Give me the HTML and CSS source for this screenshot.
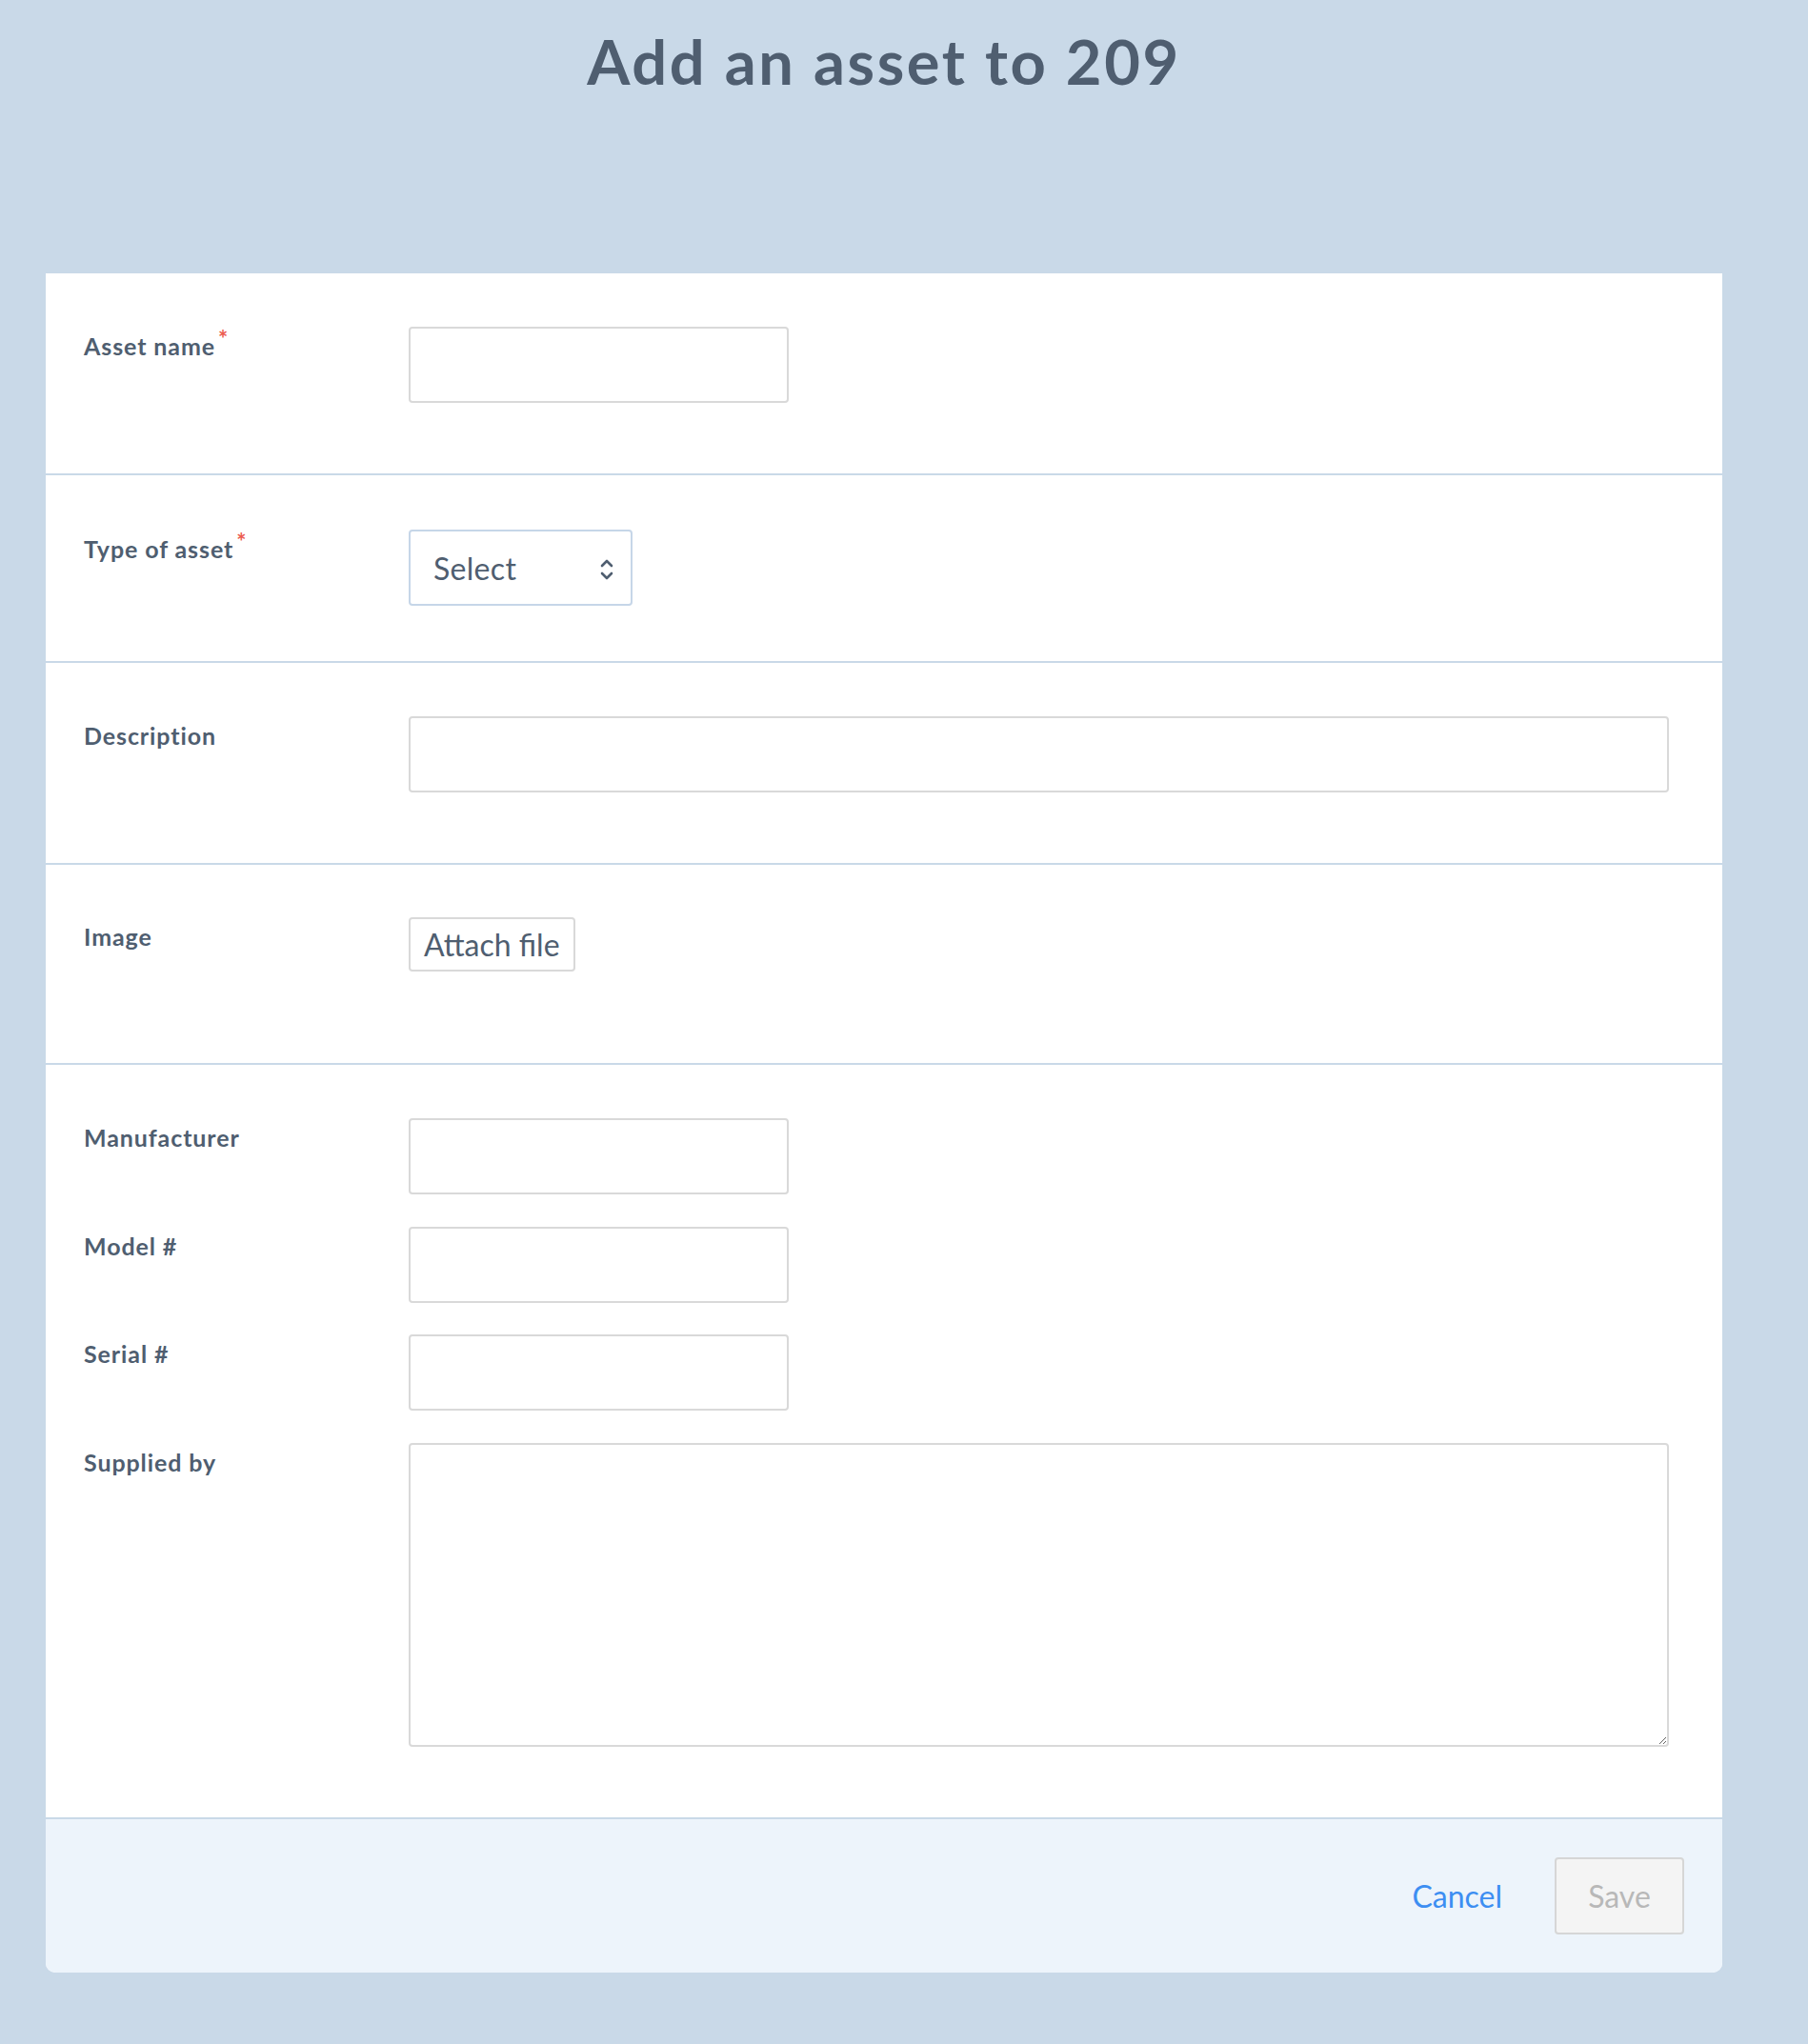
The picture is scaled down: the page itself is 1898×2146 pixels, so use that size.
FILE: index.html
```html
<!DOCTYPE html>
<html lang="en">
<head>
<meta charset="utf-8">
<title>Add an asset to 209</title>
<link rel="stylesheet" href="styles.css">
</head>
<body>
<div class="page">
  <header class="page-header">
    <h1 class="title">Add an asset to 209</h1>
  </header>
  <form class="card">
    <section class="row row-name">
      <label class="label">Asset name<span class="req">*</span></label>
      <div class="field"><input class="input input-short" type="text"></div>
    </section>
    <section class="row row-type">
      <label class="label">Type of asset<span class="req">*</span></label>
      <div class="field">
        <div class="select">
          <span class="select-text">Select</span>
          <svg class="select-arrows" width="16" height="28" viewBox="0 0 16 28"><path d="M3 10 L8 5 L13 10" fill="none" stroke="#4f5e70" stroke-width="2.6" stroke-linecap="round" stroke-linejoin="round"/><path d="M3 18 L8 23 L13 18" fill="none" stroke="#4f5e70" stroke-width="2.6" stroke-linecap="round" stroke-linejoin="round"/></svg>
        </div>
      </div>
    </section>
    <section class="row row-desc">
      <label class="label">Description</label>
      <div class="field"><input class="input input-wide" type="text"></div>
    </section>
    <section class="row row-image">
      <label class="label">Image</label>
      <div class="field"><button type="button" class="attach">Attach file</button></div>
    </section>
    <section class="row row-details">
      <div class="detail-grid">
        <label class="label">Manufacturer</label>
        <div class="field"><input class="input input-short" type="text"></div>
        <label class="label">Model #</label>
        <div class="field"><input class="input input-short" type="text"></div>
        <label class="label">Serial #</label>
        <div class="field"><input class="input input-short" type="text"></div>
        <label class="label">Supplied by</label>
        <div class="field"><textarea class="textarea"></textarea></div>
      </div>
    </section>
    <footer class="card-footer">
      <a class="cancel" href="#">Cancel</a>
      <button type="button" class="save" disabled>Save</button>
    </footer>
  </form>
</div>
</body>
</html>
```

FILE: styles.css
```css
* { box-sizing: border-box; }

html, body {
  margin: 0;
  padding: 0;
  background: #c9d9e8;
}

body {
  font-family: Lato, "Open Sans", "Liberation Sans", sans-serif;
  color: #4f5e70;
}

.page {
  width: 1760px;
  margin-left: 48px;
  padding-bottom: 75px;
}

.page-header {
  height: 287px;
  padding-top: 32px;
}

.title {
  margin: 0;
  text-align: center;
  font-size: 65px;
  line-height: 64px;
  font-weight: 700;
  letter-spacing: 2.6px;
  color: #4f5e70;
}

.card {
  background: #ffffff;
  border-radius: 0 0 10px 10px;
  overflow: hidden;
}

.row {
  display: grid;
  grid-template-columns: 341px 1fr;
  padding: 56px 56px 74px 40px;
  border-bottom: 2px solid #c9d9e8;
}

.row-type { padding-top: 57px; padding-bottom: 58px; }
.row-image { padding-top: 55px; padding-bottom: 96px; }
.row-details { display: block; }

.detail-grid {
  display: grid;
  grid-template-columns: 341px 1fr;
  row-gap: 33.5px;
}

.label {
  font-size: 25px;
  line-height: 30px;
  font-weight: 700;
  letter-spacing: 0.9px;
  padding-top: 5px;
  color: #4f5e70;
}

.req {
  color: #ec5b50;
  font-size: 24px;
  font-weight: 700;
  margin-left: 3px;
  position: relative;
  top: -8px;
  letter-spacing: 0;
}

.input {
  display: block;
  height: 80px;
  border: 2px solid #d9d9d9;
  border-radius: 4px;
  background: #ffffff;
  font-family: inherit;
  font-size: 32px;
  color: #4f5e70;
  padding: 0 24px;
  outline: none;
}

.input-short { width: 399px; }
.input-wide { width: 100%; }

.select {
  width: 235px;
  height: 80px;
  border: 2px solid #c6d6e8;
  border-radius: 4px;
  display: flex;
  align-items: center;
  justify-content: space-between;
  padding: 0 17px 0 24px;
}

.select-text {
  font-size: 32px;
  font-weight: 400;
  letter-spacing: 0.3px;
  color: #4f5e70;
}

.select-arrows { display: block; margin-top: 4px; }

.attach {
  height: 57px;
  padding: 0 14px;
  border: 2px solid #d9d9d9;
  border-radius: 4px;
  background: #ffffff;
  font-family: inherit;
  font-size: 32px;
  color: #4f5e70;
  line-height: 1;
}

.textarea {
  display: block;
  width: 100%;
  height: 319px;
  border: 2px solid #d9d9d9;
  border-radius: 4px;
  font-family: inherit;
  font-size: 28px;
  padding: 12px 24px;
  resize: both;
  outline: none;
}

.card-footer {
  background: #edf4fb;
  height: 161px;
  display: flex;
  justify-content: flex-end;
  align-items: center;
  gap: 55px;
  padding: 0 40px;
}

.cancel {
  font-size: 32px;
  color: #3d8ef2;
  text-decoration: none;
}

.save {
  width: 136px;
  height: 81px;
  border: 2px solid #d6d6d6;
  border-radius: 4px;
  background: #f4f4f4;
  font-family: inherit;
  font-size: 32px;
  color: #b8b8b8;
}
```
